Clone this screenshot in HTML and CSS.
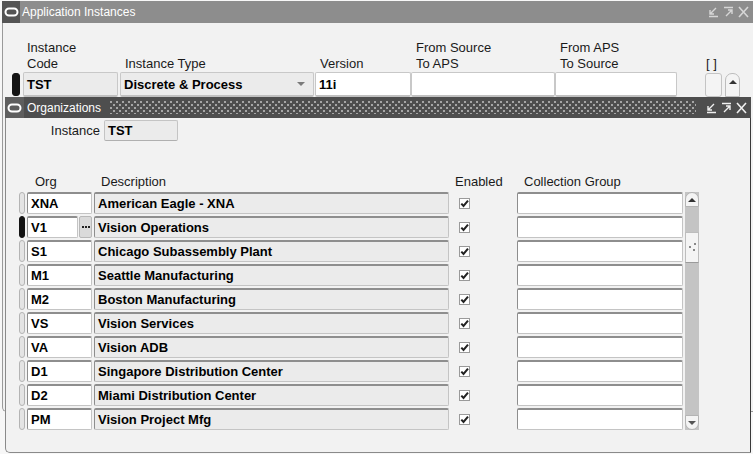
FILE: index.html
```html
<!DOCTYPE html>
<html>
<head>
<meta charset="utf-8">
<link rel="stylesheet" href="styles.css">
</head>
<body>
<div class="desktop">
  <div class="win outer">
    <div class="titlebar light">
      <span class="appico"><svg width="15" height="10" viewBox="0 0 15 10"><rect x="1.5" y="1.5" width="12" height="7" rx="3.5" fill="none" stroke="#fff" stroke-width="2"/></svg></span>
      <span class="title">Application Instances</span>
      <span class="fill"></span>
      <span class="btns">
        <svg width="15" height="12" viewBox="0 0 15 12"><path d="M10 2 L4 8 M4 4 V8 H8 M3 10.5 H12" fill="none" stroke="currentColor" stroke-width="1.4"/></svg>
        <svg width="15" height="12" viewBox="0 0 15 12"><path d="M3 1.5 H12 M5 10 L11 4 M7 4 H11 V8" fill="none" stroke="currentColor" stroke-width="1.4"/></svg>
        <svg width="15" height="12" viewBox="0 0 15 12"><path d="M3 1 L12 11 M12 1 L3 11" fill="none" stroke="currentColor" stroke-width="1.6"/></svg>
      </span>
    </div>
    <div class="obody">
      <div class="hgrid">
        <div class="lbl c-code">Instance<br>Code</div>
        <div class="lbl c-type">Instance Type</div>
        <div class="lbl c-ver">Version</div>
        <div class="lbl c-src">From Source<br>To APS</div>
        <div class="lbl c-aps">From APS<br>To Source</div>
        <div class="lbl c-chk">[ ]</div>

        <div class="ind cur c-ind"></div>
        <div class="fld grey c-code"><b>TST</b></div>
        <div class="fld grey c-type"><b>Discrete &amp; Process</b><span class="dd"></span></div>
        <div class="fld c-ver"><b>11i</b></div>
        <div class="fld c-src"></div>
        <div class="fld c-aps"></div>
        <div class="cbox c-chk"></div>
        <div class="sup c-scr"><span class="tri up"></span></div>
      </div>
    </div>
  </div>

  <div class="win inner">
    <div class="titlebar dark">
      <span class="appico"><svg width="15" height="10" viewBox="0 0 15 10"><rect x="1.5" y="1.5" width="12" height="7" rx="3.5" fill="none" stroke="#fff" stroke-width="2"/></svg></span>
      <span class="title">Organizations</span>
      <span class="dots"></span>
      <span class="btns">
        <svg width="15" height="12" viewBox="0 0 15 12"><path d="M10 2 L4 8 M4 4 V8 H8 M3 10.5 H12" fill="none" stroke="currentColor" stroke-width="1.4"/></svg>
        <svg width="15" height="12" viewBox="0 0 15 12"><path d="M3 1.5 H12 M5 10 L11 4 M7 4 H11 V8" fill="none" stroke="currentColor" stroke-width="1.4"/></svg>
        <svg width="15" height="12" viewBox="0 0 15 12"><path d="M3 1 L12 11 M12 1 L3 11" fill="none" stroke="currentColor" stroke-width="1.6"/></svg>
      </span>
    </div>
    <div class="ibody">
      <div class="instrow">
        <span class="ilbl">Instance</span>
        <div class="fld grey ifld"><b>TST</b></div>
      </div>

      <div class="thead">
        <span class="h-org">Org</span>
        <span class="h-desc">Description</span>
        <span class="h-en">Enabled</span>
        <span class="h-cg">Collection Group</span>
      </div>

      <div class="tbl">
        <div class="rows">
          <div class="row"><div class="ind"></div><div class="fld org"><b>XNA</b></div><div class="fld grey desc"><b>American Eagle - XNA</b></div><div class="en"><span class="chk"></span></div><div class="fld cg"></div></div>
          <div class="row"><div class="ind cur"></div><div class="orgwrap"><div class="fld org2"><b>V1</b></div><div class="lov"><span></span><span></span><span></span></div></div><div class="fld grey desc"><b>Vision Operations</b></div><div class="en"><span class="chk"></span></div><div class="fld cg"></div></div>
          <div class="row"><div class="ind"></div><div class="fld org"><b>S1</b></div><div class="fld grey desc"><b>Chicago Subassembly Plant</b></div><div class="en"><span class="chk"></span></div><div class="fld cg"></div></div>
          <div class="row"><div class="ind"></div><div class="fld org"><b>M1</b></div><div class="fld grey desc"><b>Seattle Manufacturing</b></div><div class="en"><span class="chk"></span></div><div class="fld cg"></div></div>
          <div class="row"><div class="ind"></div><div class="fld org"><b>M2</b></div><div class="fld grey desc"><b>Boston Manufacturing</b></div><div class="en"><span class="chk"></span></div><div class="fld cg"></div></div>
          <div class="row"><div class="ind"></div><div class="fld org"><b>VS</b></div><div class="fld grey desc"><b>Vision Services</b></div><div class="en"><span class="chk"></span></div><div class="fld cg"></div></div>
          <div class="row"><div class="ind"></div><div class="fld org"><b>VA</b></div><div class="fld grey desc"><b>Vision ADB</b></div><div class="en"><span class="chk"></span></div><div class="fld cg"></div></div>
          <div class="row"><div class="ind"></div><div class="fld org"><b>D1</b></div><div class="fld grey desc"><b>Singapore Distribution Center</b></div><div class="en"><span class="chk"></span></div><div class="fld cg"></div></div>
          <div class="row"><div class="ind"></div><div class="fld org"><b>D2</b></div><div class="fld grey desc"><b>Miami Distribution Center</b></div><div class="en"><span class="chk"></span></div><div class="fld cg"></div></div>
          <div class="row"><div class="ind"></div><div class="fld org"><b>PM</b></div><div class="fld grey desc"><b>Vision Project Mfg</b></div><div class="en"><span class="chk"></span></div><div class="fld cg"></div></div>
        </div>
        <div class="vscroll">
          <div class="sbtn top"><span class="tri up"></span></div>
          <div class="track">
            <div class="thumb"><span class="grip"></span></div>
          </div>
          <div class="sbtn bot"><span class="tri down"></span></div>
        </div>
      </div>
    </div>
  </div>
</div>
</body>
</html>
```

FILE: styles.css
```css
html, body {
  margin: 0;
  padding: 0;
  overflow: hidden;
  background: #f7f7f7;
  font-family: "Liberation Sans", Arial, sans-serif;
  color: #000;
}

.desktop {
  position: relative;
  width: 753px;
  height: 454px;
}

.win {
  position: absolute;
  box-sizing: border-box;
  display: flex;
  flex-direction: column;
}

.outer {
  left: 2px;
  top: 1px;
  width: 751px;
  height: 411px;
}

.inner {
  left: 5px;
  top: 97px;
  width: 746px;
  height: 356px;
}

/* title bars */
.titlebar {
  display: flex;
  align-items: center;
  flex: none;
  color: #fff;
  font-size: 12px;
}
.titlebar.light {
  height: 22px;
  background: #8d8d8d;
}
.titlebar.dark {
  height: 21px;
  background: #4e4e4e;
}
.appico {
  width: 18px;
  align-self: stretch;
  display: flex;
  align-items: center;
  justify-content: center;
  background: #545454;
}
.dark .appico {
  background: #5e5e5e;
  width: 19px;
}
.title {
  padding-left: 2px;
  white-space: nowrap;
}
.dark .title {
  padding-left: 3px;
}
.fill {
  flex: 1;
}
.dots {
  flex: 1;
  align-self: stretch;
  margin: 4px 8px 4px 9px;
  background-image:
    radial-gradient(circle at 1px 1px, #a8a8a8 0.7px, transparent 1px),
    radial-gradient(circle at 4px 4px, #a8a8a8 0.7px, transparent 1px);
  background-size: 6px 6px, 6px 6px;
}
.btns {
  display: flex;
  gap: 0;
  padding-right: 2px;
}
.light .btns {
  color: #d6d6d6;
}
.dark .btns {
  color: #f0f0f0;
}

/* outer body */
.obody {
  flex: 1;
  background: #f2f2f2;
  border-left: 1px solid #9a9a9a;
  border-bottom: 1px solid #9a9a9a;
  border-bottom-left-radius: 5px;
  padding: 17px 0 0 9px;
}

.hgrid {
  display: grid;
  grid-template-columns: 8px 3px 95px 2px 194px 1px 96px 144px 122px 28px 17px 3px 15px;
  grid-template-rows: 32px 25px;
}
.lbl {
  font-size: 13px;
  line-height: 16px;
  align-self: end;
  padding-left: 4px;
  white-space: nowrap;
  color: #1a1a1a;
}
.c-ind { grid-column: 1; grid-row: 2; }
.c-code { grid-column: 3; }
.c-type { grid-column: 5; padding-left: 5px; }
.c-ver { grid-column: 7; padding-left: 5px; }
.c-src { grid-column: 8; padding-left: 5px; }
.c-aps { grid-column: 9; padding-left: 5px; }
.c-chk { grid-column: 11; padding-left: 1px; }
.c-scr { grid-column: 13; grid-row: 2; }
.hgrid .fld, .hgrid .cbox { grid-row: 2; }
.hgrid .fld.c-type, .hgrid .fld.c-ver, .hgrid .fld.c-src, .hgrid .fld.c-aps { padding-left: 3px; }

/* fields */
.fld {
  box-sizing: border-box;
  background: #fff;
  border: 1px solid #c4c4c4;
  border-top: 2px solid #8e8e8e;
  border-left-color: #8e8e8e;
  border-radius: 2px;
  display: flex;
  align-items: center;
  padding-left: 3px;
  font-size: 13px;
  white-space: nowrap;
  overflow: hidden;
}
.hgrid .fld {
  border: 1px solid #c8c8c8;
  border-bottom: 2px solid #c0c0c0;
}
.fld.grey {
  background: #ebebeb;
}
.fld b {
  font-weight: bold;
}
.dd {
  margin-left: auto;
  margin-right: 8px;
  width: 0;
  height: 0;
  border-left: 4px solid transparent;
  border-right: 4px solid transparent;
  border-top: 4px solid #7a7a7a;
}

.ind {
  box-sizing: border-box;
  width: 6px;
  border-radius: 3px;
  background: #e4e4e4;
  border: 1px solid #b4b4b4;
}
.ind.cur {
  background: #141414;
  border-color: #141414;
}
.hgrid .ind {
  width: 8px;
  margin-top: 1px;
  height: 23px;
}

.cbox {
  box-sizing: border-box;
  border: 1px solid #c4c4c4;
  border-radius: 3px;
  background: #f4f4f4;
  margin-top: 1px;
}
.sup {
  box-sizing: border-box;
  border: 1px solid #bdbdbd;
  border-radius: 7px 7px 0 0;
  background: #f4f4f4;
  margin-top: 1px;
  display: flex;
  justify-content: center;
  padding-top: 6px;
}

.tri {
  width: 0;
  height: 0;
  border-left: 4px solid transparent;
  border-right: 4px solid transparent;
}
.tri.up {
  border-bottom: 4px solid #333;
}
.tri.down {
  border-top: 4px solid #555;
}

/* inner body */
.ibody {
  flex: 1;
  background: #f2f2f2;
  border-left: 1px solid #8a8a8a;
  border-right: 1px solid #3a3a3a;
  border-bottom: 1px solid #8a8a8a;
  border-bottom-left-radius: 5px;
  display: flex;
  flex-direction: column;
}

.instrow {
  display: flex;
  align-items: center;
  margin-top: 2px;
  height: 21px;
}
.ilbl {
  width: 94px;
  text-align: right;
  font-size: 13px;
  color: #1a1a1a;
}
.ifld {
  margin-left: 4px;
  width: 74px;
  height: 21px;
  border: 1px solid #c4c4c4;
  border-bottom-color: #b0b0b0;
}

.thead {
  margin-top: 33px;
  height: 16px;
  display: flex;
  font-size: 13px;
  line-height: 16px;
  color: #1a1a1a;
  white-space: nowrap;
}
.h-org { margin-left: 29px; width: 66px; }
.h-desc { width: 354px; }
.h-en { width: 69px; }

.tbl {
  display: flex;
  margin-top: 2px;
  padding-left: 13px;
}
.rows {
  display: flex;
  flex-direction: column;
  gap: 2px;
}
.row {
  display: flex;
  height: 22px;
}
.row .ind {
  margin-right: 2px;
}
.org {
  width: 65px;
}
.orgwrap {
  width: 65px;
  display: flex;
  gap: 1px;
}
.org2 {
  width: 51px;
}
.lov {
  box-sizing: border-box;
  width: 13px;
  background: #dadada;
  border: 1px solid #b8b8b8;
  border-radius: 2px;
  display: flex;
  align-items: center;
  justify-content: center;
  gap: 1px;
}
.lov span {
  width: 2px;
  height: 2px;
  background: #222;
}
.desc {
  margin-left: 2px;
  width: 355px;
}
.en {
  width: 68px;
  display: flex;
  align-items: center;
}
.chk {
  box-sizing: border-box;
  margin-left: 10px;
  width: 11px;
  height: 11px;
  border: 1px solid #9a9a9a;
  background: #fff url("data:image/svg+xml;utf8,<svg xmlns='http://www.w3.org/2000/svg' width='9' height='9' viewBox='0 0 9 9'><path d='M1.3 4.6 L3.5 7 L8 1.6' fill='none' stroke='%23222' stroke-width='2'/></svg>") center / 9px 9px no-repeat;
}
.cg {
  width: 166px;
}

.vscroll {
  margin-left: 2px;
  width: 14px;
  height: 238px;
  display: flex;
  flex-direction: column;
  background: #c4c4c4;
}
.sbtn {
  box-sizing: border-box;
  height: 15px;
  flex: none;
  background: #f4f4f4;
  border: 1px solid #b4b4b4;
  display: flex;
  justify-content: center;
  align-items: center;
}
.sbtn.top {
  border-radius: 7px 7px 0 0;
}
.sbtn.bot {
  border-radius: 0 0 7px 7px;
}
.track {
  flex: 1;
  display: flex;
  flex-direction: column;
  padding-top: 25px;
}
.thumb {
  box-sizing: border-box;
  height: 31px;
  background: #f4f4f4;
  border: 1px solid #bdbdbd;
  border-bottom-color: #9a9a9a;
  position: relative;
}
.grip {
  position: absolute;
  left: 3px;
  top: 10px;
  width: 8px;
  height: 8px;
  background-image:
    radial-gradient(circle at 6px 1px, #888 0.8px, transparent 1px),
    radial-gradient(circle at 1px 4px, #888 0.8px, transparent 1px),
    radial-gradient(circle at 5px 7px, #888 0.8px, transparent 1px);
}
```
